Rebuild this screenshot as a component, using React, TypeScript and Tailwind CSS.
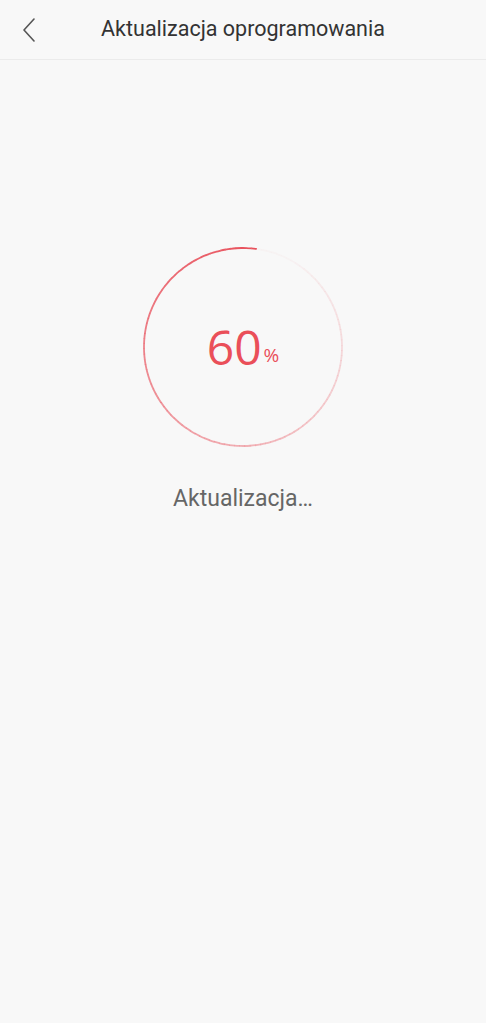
import React from 'react';

const CX = 100;
const CY = 100;
const R = 99;

// ring drawn as short arc pieces so the colour can fade along the sweep
const segments = Array.from({ length: 120 }, (_, i) => {
  const start = 8 - i * 3; // degrees clockwise from top, going counter-clockwise
  const end = start - 3.2;
  const toXY = (deg: number) => {
    const rad = (deg * Math.PI) / 180;
    return [CX + R * Math.sin(rad), CY - R * Math.cos(rad)];
  };
  const [x1, y1] = toXY(start);
  const [x2, y2] = toXY(end);
  const t = i / 119;
  const opacity = Math.max(0.03, Math.pow(1 - t, 1.15));
  return { d: `M ${x1} ${y1} A ${R} ${R} 0 0 0 ${x2} ${y2}`, opacity };
});

export default function App() {
  return (
    <div className="w-[486px] h-[1023px] bg-[#f8f8f8] font-['Roboto',sans-serif] flex flex-col">
      <div className="h-[60px] flex items-center relative border-b border-[#ebebeb]">
        <button className="absolute left-[18px] top-[16px] w-[22px] h-[28px] flex items-center justify-center">
          <svg width="14" height="24" viewBox="0 0 14 24" fill="none">
            <path d="M12 1 L2 12 L12 23" stroke="#555" strokeWidth="1.6" strokeLinecap="round" strokeLinejoin="round" />
          </svg>
        </button>
        <h1 className="flex-1 text-center text-[21.5px] text-[#333] pb-[1px]">Aktualizacja oprogramowania</h1>
      </div>

      <div className="flex flex-col items-center pt-[187px]">
        <div className="relative w-[200px] h-[200px]">
          <svg width="200" height="200" viewBox="0 0 200 200" className="absolute inset-0">
            {segments.map((s, i) => (
              <path key={i} d={s.d} stroke="#e8505b" strokeWidth="1.8" fill="none" opacity={s.opacity} />
            ))}
          </svg>
          <div className="absolute inset-0 flex items-center justify-center font-['Open_Sans',sans-serif]">
            <span className="text-[48px] leading-none text-[#ea4f59]">60</span>
            <span className="text-[19px] leading-none text-[#ea4f59] mt-[16px] ml-[2px]">%</span>
          </div>
        </div>
        <p className="mt-[35px] text-[23px] text-[#666]">Aktualizacja…</p>
      </div>
    </div>
  );
}
